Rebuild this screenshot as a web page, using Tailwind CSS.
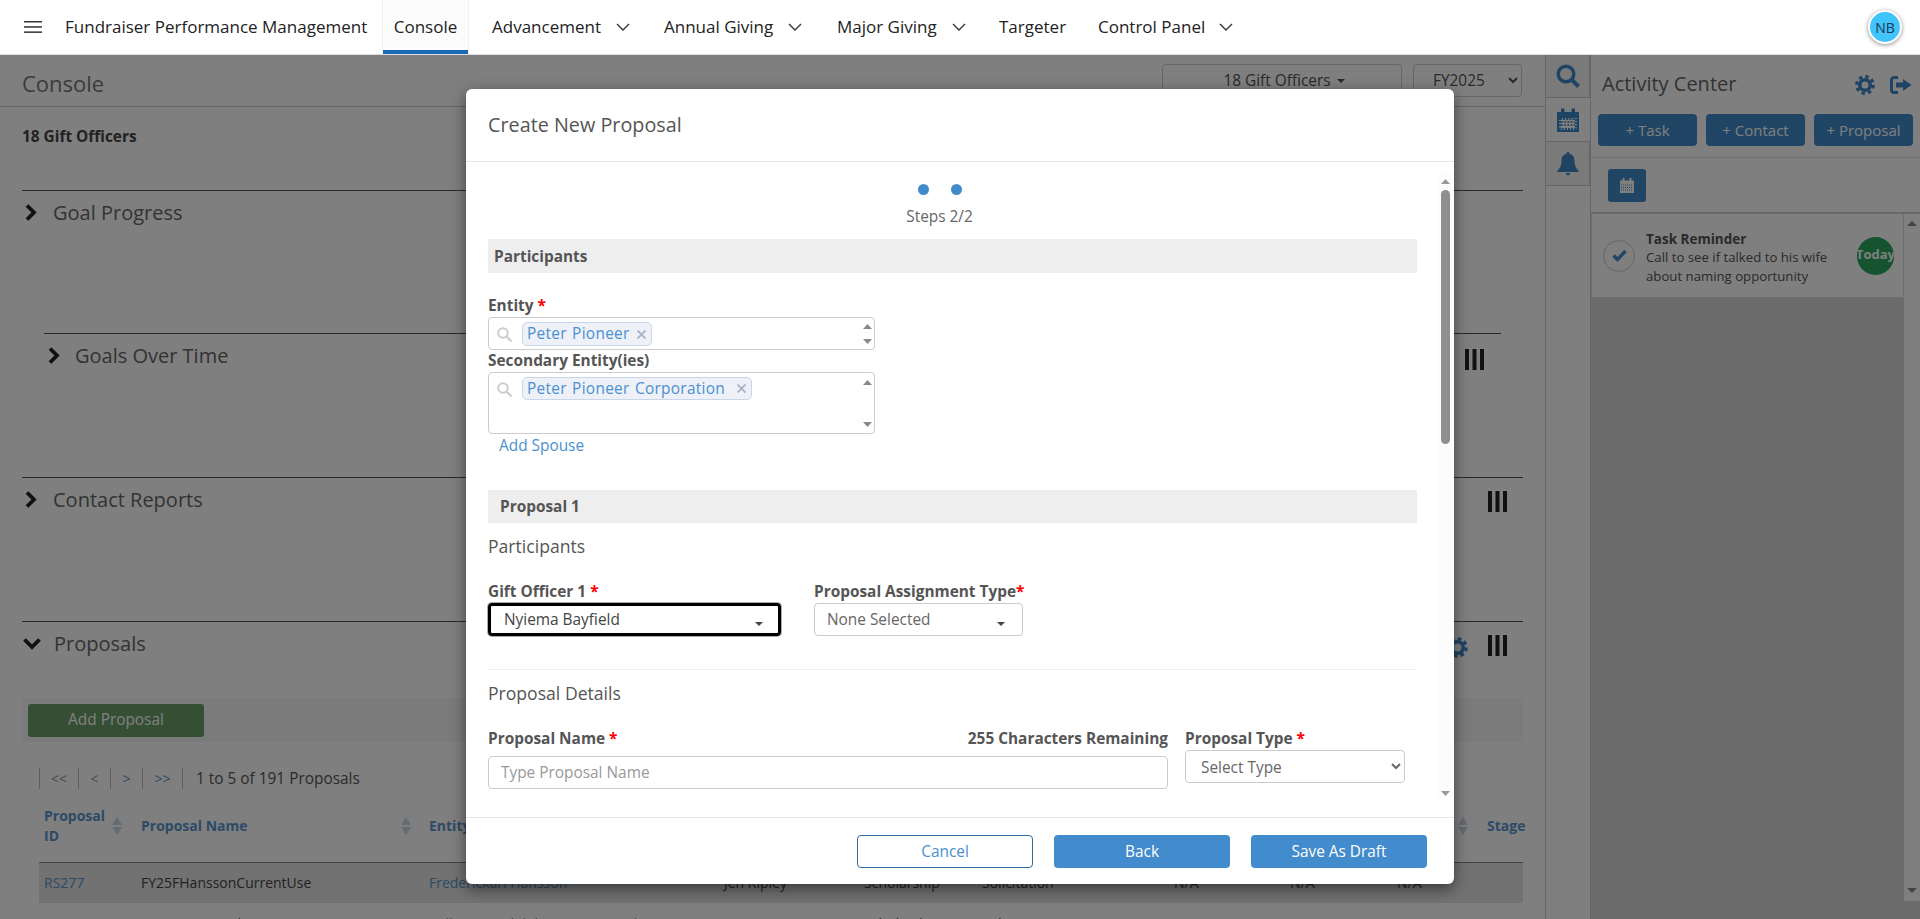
<!DOCTYPE html>
<html lang="en">
<head>
    <meta charset="UTF-8">
    <title>Fundraiser Performance Management</title>
    <script src="https://cdn.jsdelivr.net/npm/@tailwindcss/browser@4"></script>
</head>
<body class="h-[919px] overflow-hidden bg-white font-['Open_Sans',sans-serif] text-[15.4px] text-[#333]">

    <!-- top nav -->
    <header class="relative z-30 flex h-[55px] items-center border-b border-[#ddd] bg-white text-[17px] text-[#222]">
        <svg class="ml-[24px] h-[14px] w-[18px]" viewBox="0 0 18 14" fill="#333"><rect y="1" width="18" height="1.5"/><rect y="6.2" width="18" height="1.5"/><rect y="11.4" width="18" height="1.5"/></svg>
        <span class="ml-[23px] w-[317px] whitespace-nowrap">Fundraiser Performance Management</span>
        <a class="relative flex h-full w-[87px] items-center justify-center border-x border-[#f0f0f0] bg-[#fcfcfc]">Console<span class="absolute inset-x-0 bottom-0 h-[4px] bg-[#1b6ab5]"></span></a>
        <a class="ml-[23px] flex w-[172px] items-center">Advancement<svg class="ml-[15px] h-[9px] w-[14px]" viewBox="0 0 14 9" fill="none" stroke="#333" stroke-width="1.4"><path d="M1 1l6 6 6-6"/></svg></a>
        <a class="flex w-[173px] items-center">Annual Giving<svg class="ml-[15px] h-[9px] w-[14px]" viewBox="0 0 14 9" fill="none" stroke="#333" stroke-width="1.4"><path d="M1 1l6 6 6-6"/></svg></a>
        <a class="flex w-[162px] items-center">Major Giving<svg class="ml-[15px] h-[9px] w-[14px]" viewBox="0 0 14 9" fill="none" stroke="#333" stroke-width="1.4"><path d="M1 1l6 6 6-6"/></svg></a>
        <a class="w-[99px]">Targeter</a>
        <a class="flex items-center">Control Panel<svg class="ml-[14px] h-[9px] w-[14px]" viewBox="0 0 14 9" fill="none" stroke="#333" stroke-width="1.4"><path d="M1 1l6 6 6-6"/></svg></a>
        <div class="ml-auto mr-[18px] flex h-[34px] w-[34px] items-center justify-center rounded-full border-[2px] border-white bg-[#40c4fb] text-[14px] text-[#1d3557] shadow-[0_1px_4px_rgba(0,0,0,0.45)]">NB</div>
    </header>

    <!-- page under the modal -->
    <main class="relative flex h-[864px] overflow-hidden">
        <section class="w-[1546px] shrink-0 border-r border-[#ccc]">
            <div class="flex h-[52px] items-center border-b border-[#ccc] pl-[22px] pr-[23px]">
                <h1 class="mt-[5px] text-[22px] text-[#777]">Console</h1>
                <button class="ml-auto flex h-[33px] w-[240px] items-center justify-center gap-[6px] rounded-[4px] border border-[#ccc] pl-[4px] text-[#555]">18 Gift Officers<span class="h-0 w-0 border-x-[4px] border-t-[4px] border-x-transparent border-t-[#555]"></span></button>
                <select class="ml-[11px] h-[33px] w-[109px] rounded-[4px] border border-[#ccc] bg-white pl-[15px] text-[#555]"><option>FY2025</option></select>
            </div>
            <div class="h-[83px] pl-[22px] pt-[20px] font-bold leading-[20px] text-[#444]">18 Gift Officers</div>

            <div class="mx-[22px] h-[143px] border-t border-[#555] text-[20px] text-[#666]">
                <div class="flex h-[43px] items-center pl-[3px]">
                    <svg class="h-[17px] w-[12px]" viewBox="0 0 12 17" fill="none" stroke="#222" stroke-width="3.8"><path d="M2 1.500L9 8.500 2 15.500"/></svg>
                    <span class="ml-[16px]">Goal Progress</span>
                </div>
            </div>
            <div class="mx-[44px] mr-[44px] h-[144px] border-t border-[#555] text-[20px] text-[#666]">
                <div class="flex h-[43px] items-center pl-[4px]">
                    <svg class="h-[17px] w-[12px]" viewBox="0 0 12 17" fill="none" stroke="#222" stroke-width="3.8"><path d="M2 1.500L9 8.500 2 15.500"/></svg>
                    <span class="ml-[15px]">Goals Over Time</span>
                    <svg class="ml-auto mr-[17px] mt-[7px] h-[21px] w-[19px]" viewBox="0 0 19 21" fill="#222"><rect width="4" height="21"/><rect x="7.500" width="4" height="21"/><rect x="15" width="4" height="21"/></svg>
                </div>
            </div>
            <div class="mx-[22px] h-[144px] border-t border-[#555] text-[20px] text-[#666]">
                <div class="flex h-[43px] items-center pl-[3px]">
                    <svg class="h-[17px] w-[12px]" viewBox="0 0 12 17" fill="none" stroke="#222" stroke-width="3.8"><path d="M2 1.500L9 8.500 2 15.500"/></svg>
                    <span class="ml-[16px]">Contact Reports</span>
                    <svg class="ml-auto mr-[16px] mt-[4px] h-[21px] w-[19px]" viewBox="0 0 19 21" fill="#222"><rect width="4" height="21"/><rect x="7.500" width="4" height="21"/><rect x="15" width="4" height="21"/></svg>
                </div>
            </div>
            <div class="mx-[22px] border-t border-[#555] text-[20px] text-[#666]">
                <div class="flex h-[43px] items-center pl-[1px]">
                    <svg class="h-[13px] w-[18px]" viewBox="0 0 18 13" fill="none" stroke="#222" stroke-width="3.8"><path d="M1.500 2.500L9 10l7.500-7.500"/></svg>
                    <span class="ml-[13px]">Proposals</span>
                    <svg class="ml-auto mr-[20px] mt-[7px] h-[21px] w-[21px]" viewBox="0 0 20 20"><circle cx="10" cy="10" r="5.500" fill="none" stroke="#3f86c4" stroke-width="3.500"/><circle cx="10" cy="10" r="8.300" fill="none" stroke="#3f86c4" stroke-width="3" stroke-dasharray="3.500 3"/></svg>
                    <svg class="mr-[16px] mt-[4px] h-[21px] w-[19px]" viewBox="0 0 19 21" fill="#222"><rect width="4" height="21"/><rect x="7.500" width="4" height="21"/><rect x="15" width="4" height="21"/></svg>
                </div>
                <div class="mt-[33px] flex h-[44px] items-center bg-[#f6f6f6] pl-[6px]">
                    <button class="h-[33px] w-[176px] rounded-[3px] bg-[#6a9f6a] text-[15.4px] text-white">Add Proposal</button>
                </div>
                <div class="mt-[26px] flex h-[21px] items-center pl-[17px] text-[14px]">
                    <span class="flex h-full w-[40px] items-center justify-center border-x border-[#bbb] text-[#999]">&lt;&lt;</span>
                    <span class="flex h-full w-[32px] items-center justify-center border-r border-[#bbb] text-[#999]">&lt;</span>
                    <span class="flex h-full w-[32px] items-center justify-center border-r border-[#bbb] text-[#5b8fc4]">&gt;</span>
                    <span class="flex h-full w-[40px] items-center justify-center border-r border-[#bbb] text-[#5b8fc4]">&gt;&gt;</span>
                    <span class="ml-[13px] text-[15.4px] text-[#555]">1 to 5 of 191 Proposals</span>
                </div>
                <table class="ml-[17px] mt-[1px] w-[1484px] table-fixed border-collapse text-[14px] leading-[20px]">
                    <colgroup>
                        <col class="w-[96px]"><col class="w-[288px]"><col class="w-[295px]"><col class="w-[140px]"><col class="w-[118px]"><col class="w-[192px]"><col class="w-[116px]"><col class="w-[107px]"><col class="w-[90px]"><col>
                    </colgroup>
                    <thead class="font-bold text-[#5a94cc]">
                        <tr class="h-[72px] border-b border-[#888] text-left">
                            <th class="relative pl-[5px]"><span class="block w-[70px]">Proposal ID</span>
                                <svg class="absolute right-[13px] top-[27px] h-[18px] w-[10px]" viewBox="0 0 10 18" fill="#c8d6e3"><path d="M5 0l5 8H0zM5 18L0 10h10z"/></svg></th>
                            <th class="relative pl-[6px]">Proposal Name
                                <svg class="absolute right-[12px] top-[27px] h-[18px] w-[10px]" viewBox="0 0 10 18" fill="#c8d6e3"><path d="M5 0l5 8H0zM5 18L0 10h10z"/></svg></th>
                            <th class="pl-[6px]">Entity</th>
                            <th></th><th></th><th></th><th></th><th></th>
                            <th class="relative"><svg class="absolute right-[13px] top-[27px] h-[18px] w-[10px]" viewBox="0 0 10 18" fill="#c8d6e3"><path d="M5 0l5 8H0zM5 18L0 10h10z"/></svg></th>
                            <th class="pl-[6px]">Stage</th>
                        </tr>
                    </thead>
                    <tbody class="text-[#444]">
                        <tr class="h-[41px] bg-[#e4e4e4]">
                            <td class="pl-[5px] text-[#5a94cc]">RS277</td>
                            <td class="pl-[6px]">FY25FHanssonCurrentUse</td>
                            <td class="pl-[6px] text-[#5a94cc]">Frederickarl Hansson</td>
                            <td class="pl-[6px]">Jen Ripley</td>
                            <td class="pl-[6px]">Scholarship</td>
                            <td class="pl-[6px]">Solicitation</td>
                            <td class="pl-[6px]">N/A</td>
                            <td class="pl-[6px]">N/A</td>
                            <td class="pl-[6px]">N/A</td>
                            <td></td>
                        </tr>
                        <tr class="h-[41px]">
                            <td class="pl-[5px] text-[#5a94cc]">RS276</td>
                            <td class="pl-[6px]">FY25 Hauert Edu 2024R</td>
                            <td class="pl-[6px] text-[#5a94cc]">William Randolph Hauert Foundation</td>
                            <td class="pl-[6px]">Jason Carter</td>
                            <td class="pl-[6px]">Scholarship</td>
                            <td class="pl-[6px]">Solicitation</td>
                            <td class="pl-[6px]">N/A</td>
                            <td class="pl-[6px]">N/A</td>
                            <td class="pl-[6px]">N/A</td>
                            <td></td>
                        </tr>
                    </tbody>
                </table>
            </div>
        </section>

        <!-- tab strip -->
        <nav class="w-[44px] shrink-0">
            <div class="flex h-[43px] items-center justify-center border-b border-r border-[#ccc] bg-[#f4f4f4]">
                <svg class="h-[24px] w-[24px]" viewBox="0 0 24 24" fill="none" stroke="#3f86c4" stroke-width="3.400"><circle cx="10" cy="10" r="7.800"/><path d="M15.500 15.500l7 7" stroke-width="4"/></svg>
            </div>
            <div class="flex h-[43px] items-center justify-center">
                <svg class="h-[24px] w-[22px]" viewBox="0 0 22 24" fill="#3f86c4"><path d="M0 4h22v20H0zM2 10v12h18V10z"/><rect x="4" y="0.500" width="3.500" height="5"/><rect x="14.500" y="0.500" width="3.500" height="5"/><path d="M3 11h16v10H3z" stroke="#3f86c4" stroke-width="2" stroke-dasharray="2 1.200" fill="none"/><path d="M4 14h14M4 17h14" stroke="#3f86c4" stroke-width="1.500" stroke-dasharray="2 1.200"/></svg>
            </div>
            <div class="flex h-[45px] items-center justify-center border-y border-r border-[#ccc] bg-[#f4f4f4]">
                <svg class="h-[24px] w-[22px]" viewBox="0 0 22 24" fill="#3f86c4"><path d="M11 0c1 0 1.500.8 1.500 1.800C16 2.600 17.500 5.500 17.500 9c0 5 2 7.500 4 9.500v1.500H.5v-1.500c2-2 4-4.500 4-9.500 0-3.500 1.500-6.400 5-7.200C9.500.8 10 0 11 0zM9 21h4c0 1.500-1 2.500-2 2.500S9 22.500 9 21z"/></svg>
            </div>
        </nav>

        <!-- activity center -->
        <aside class="flex w-[330px] shrink-0 flex-col border-l border-[#ccc] bg-[#d6d6d6]">
            <div class="bg-white">
                <div class="flex h-[59px] items-center pl-[11px]">
                    <h2 class="mb-[2px] text-[20px] text-[#666]">Activity Center</h2>
                    <svg class="ml-auto h-[20px] w-[20px]" viewBox="0 0 20 20"><circle cx="10" cy="10" r="5.300" fill="none" stroke="#3f86c4" stroke-width="3.600"/><circle cx="10" cy="10" r="8.400" fill="none" stroke="#3f86c4" stroke-width="3" stroke-dasharray="3.500 3.100"/></svg>
                    <svg class="ml-[15px] mr-[8px] h-[18px] w-[22px]" viewBox="0 0 22 18"><path d="M8 1.500H4A2.500 2.500 0 0 0 1.500 4v10A2.500 2.500 0 0 0 4 16.500h4" fill="none" stroke="#3f86c4" stroke-width="3"/><path d="M13 3l8.500 6-8.500 6v-3.500H6v-5h7z" fill="#3f86c4"/></svg>
                </div>
                <div class="flex h-[44px] gap-[9px] border-b border-[#e0e0e0] pl-[7px] pb-[11px] text-[15px] text-white">
                    <button class="w-[99px] rounded-[4px] bg-[#428bca]">+ Task</button>
                    <button class="w-[99px] rounded-[4px] bg-[#428bca]">+ Contact</button>
                    <button class="w-[99px] rounded-[4px] bg-[#428bca]">+ Proposal</button>
                </div>
                <div class="flex h-[56px] items-center border-b-[2px] border-[#d0d0d0] pl-[17px] pt-[1px]">
                    <button class="flex h-[33px] w-[38px] items-center justify-center rounded-[3px] bg-[#428bca]">
                        <svg class="h-[15px] w-[14px]" viewBox="0 0 14 15" fill="white"><path d="M0 2.500h14V15H0z"/><rect x="2.500" y="0" width="2" height="3"/><rect x="9.500" y="0" width="2" height="3"/><path d="M1 7h12M1 9.500h12M1 12h12" stroke="#428bca" stroke-width="1" stroke-dasharray="1 1"/></svg>
                    </button>
                </div>
            </div>
            <div class="flex">
                <div class="flex h-[84px] w-[314px] items-center border-x border-b border-[#ddd] bg-white pl-[11px]">
                    <span class="flex h-[32px] w-[32px] shrink-0 items-center justify-center rounded-full border border-[#ccc]">
                        <svg class="h-[13px] w-[15px]" viewBox="0 0 15 13" fill="none" stroke="#428bca" stroke-width="3.400"><path d="M1.500 6.500L5.500 10.500 13.500 2"/></svg>
                    </span>
                    <div class="ml-[11px] mt-[5px] w-[205px] text-[13.2px] leading-[19px] text-[#555]">
                        <div class="text-[13.500px] font-bold leading-[17px] text-[#555]">Task Reminder</div>
                        Call to see if talked to his wife about naming opportunity
                    </div>
                    <span class="ml-[6px] flex h-[38px] w-[37px] shrink-0 items-start justify-center overflow-hidden rounded-full bg-[#2da85e] pt-[8px] text-[13px] font-bold leading-[18px] text-white">Today</span>
                </div>
                <div class="flex h-[687px] w-[16px] flex-col items-center bg-white pt-[7px] pb-[8px]">
                    <svg class="h-[5px] w-[10px]" viewBox="0 0 10 5" fill="#888"><path d="M5 0l5 5H0z"/></svg>
                    <svg class="mt-auto h-[5px] w-[10px]" viewBox="0 0 10 5" fill="#888"><path d="M0 0h10L5 5z"/></svg>
                </div>
            </div>
        </aside>
    </main>

    <!-- backdrop -->
    <div class="absolute inset-x-0 bottom-0 top-[55px] z-10 bg-black/50"></div>

    <!-- modal -->
    <div class="absolute left-[466px] top-[89px] z-20 h-[795px] w-[988px] rounded-[6px] bg-white text-[#555] shadow-[0_5px_15px_rgba(0,0,0,0.5)]">
        <div class="flex h-[73px] items-center border-b border-[#e5e5e5] pl-[22px] text-[19.8px]">Create New Proposal</div>

        <div class="relative h-[655px] overflow-hidden px-[22px]">
            <div class="flex w-[903px] justify-center gap-[22px] pt-[22px]">
                <span class="h-[11px] w-[11px] rounded-full bg-[#428bca]"></span>
                <span class="h-[11px] w-[11px] rounded-full bg-[#428bca]"></span>
            </div>
            <div class="mt-[12px] h-[20px] w-[903px] text-center leading-[20px] text-[#666]">Steps 2/2</div>

            <div class="mt-[12px] flex h-[34px] w-[929px] items-center bg-[#eee] pl-[6px] pt-[1px] font-bold">Participants</div>

            <div class="mt-[23px] h-[20px] font-bold leading-[20px]">Entity <span class="text-[#f00]">*</span></div>
            <div class="relative mt-[1px] h-[33px] w-[387px] rounded-[4px] border border-[#ccc] pl-[33px] pt-[4px]">
                <svg class="absolute left-[8px] top-[9px] h-[15px] w-[15px]" viewBox="0 0 15 15" fill="none" stroke="#ccc" stroke-width="2"><circle cx="6" cy="6" r="4.800"/><path d="M9.500 9.500l5 5"/></svg>
                <span class="inline-flex h-[24px] items-center rounded-[5px] border border-[#c9d6ea] bg-[#eef1f8] pl-[4px] pr-[5px] tracking-[0.3px] text-[#4a90d0] [word-spacing:1px]">Peter Pioneer<svg class="ml-[7px] h-[9px] w-[9px]" viewBox="0 0 9 9" stroke="#a9b3c6" stroke-width="1.800"><path d="M.5.500l8 8M8.500.500l-8 8"/></svg></span>
                <svg class="absolute right-[2px] top-[6px] h-[5px] w-[9px]" viewBox="0 0 9 5" fill="#888"><path d="M4.500 0L9 5H0z"/></svg>
                <svg class="absolute bottom-[5px] right-[2px] h-[5px] w-[9px]" viewBox="0 0 9 5" fill="#888"><path d="M0 0h9L4.500 5z"/></svg>
            </div>
            <div class="mt-[1px] h-[20px] font-bold leading-[20px]">Secondary Entity(ies)</div>
            <div class="relative mt-[1px] h-[62px] w-[387px] rounded-[4px] border border-[#ccc] pl-[33px] pt-[4px]">
                <svg class="absolute left-[8px] top-[9px] h-[15px] w-[15px]" viewBox="0 0 15 15" fill="none" stroke="#ccc" stroke-width="2"><circle cx="6" cy="6" r="4.800"/><path d="M9.500 9.500l5 5"/></svg>
                <span class="inline-flex h-[23px] items-center rounded-[5px] border border-[#c9d6ea] bg-[#eef1f8] pl-[4px] pr-[5px] tracking-[0.3px] text-[#4a90d0] [word-spacing:1px]">Peter Pioneer Corporation<svg class="ml-[12px] h-[9px] w-[9px]" viewBox="0 0 9 9" stroke="#a9b3c6" stroke-width="1.800"><path d="M.5.500l8 8M8.500.500l-8 8"/></svg></span>
                <svg class="absolute right-[2px] top-[7px] h-[5px] w-[9px]" viewBox="0 0 9 5" fill="#888"><path d="M4.500 0L9 5H0z"/></svg>
                <svg class="absolute bottom-[6px] right-[2px] h-[5px] w-[9px]" viewBox="0 0 9 5" fill="#888"><path d="M0 0h9L4.500 5z"/></svg>
            </div>
            <a class="mt-[2px] block h-[20px] pl-[11px] leading-[20px] text-[#4a90d0]">Add Spouse</a>

            <div class="mt-[34px] flex h-[33px] w-[929px] items-center bg-[#eee] pl-[12px] font-bold">Proposal 1</div>
            <div class="mt-[11px] h-[24px] text-[17.6px] leading-[24px]">Participants</div>

            <div class="mt-[24px] flex gap-[33px]">
                <div class="w-[293px]">
                    <div class="h-[20px] font-bold leading-[20px]">Gift Officer 1 <span class="text-[#f00]">*</span></div>
                    <button class="mt-[1px] flex h-[33px] w-full items-center rounded-[4px] border-[3px] border-black pl-[13px] pr-[15px] shadow-[0_0_0_1px_#aaa] text-[#444]">Nyiema Bayfield<span class="ml-auto mt-[8px] h-0 w-0 border-x-[4px] border-t-[4px] border-x-transparent border-t-[#444]"></span></button>
                </div>
                <div class="w-[208px]">
                    <div class="h-[20px] whitespace-nowrap font-bold leading-[20px]">Proposal Assignment Type<span class="text-[#f00]">*</span></div>
                    <button class="mt-[1px] flex h-[33px] w-[209px] items-center rounded-[4px] border border-[#ccc] pl-[12px] pr-[17px] text-[#666]">None Selected<span class="ml-auto mt-[8px] h-0 w-0 border-x-[4px] border-t-[4px] border-x-transparent border-t-[#444]"></span></button>
                </div>
            </div>

            <div class="mt-[33px] h-[1px] w-[929px] bg-[#eee]"></div>
            <div class="mt-[11px] h-[24px] text-[17.6px] leading-[24px]">Proposal Details</div>

            <div class="mt-[24px] flex">
                <div class="w-[680px]">
                    <div class="flex h-[20px] justify-between font-bold leading-[20px]">
                        <span>Proposal Name <span class="text-[#f00]">*</span></span>
                        <span>255 Characters Remaining</span>
                    </div>
                    <input type="text" placeholder="Type Proposal Name" class="mt-[7px] h-[33px] w-full rounded-[4px] border border-[#ccc] pl-[12px] placeholder:text-[#999]">
                </div>
                <div class="ml-[17px] w-[220px]">
                    <div class="h-[20px] font-bold leading-[20px]">Proposal Type <span class="text-[#f00]">*</span></div>
                    <select class="mt-[1px] h-[33px] w-full rounded-[4px] border border-[#ccc] bg-white pl-[11px] pt-[2px] text-[#666]"><option>Select Type</option></select>
                </div>
            </div>

            <!-- modal scrollbar -->
            <div class="absolute bottom-[20px] right-[2px] top-[11px] flex w-[14px] flex-col items-center bg-[#fcfcfc]">
                <svg class="mt-[6px] h-[5px] w-[9px]" viewBox="0 0 9 5" fill="#999"><path d="M4.500 0L9 5H0z"/></svg>
                <div class="mt-[6px] h-[254px] w-[9px] rounded-full bg-[#8f8f8f]"></div>
                <svg class="mb-[1px] mt-auto h-[5px] w-[9px]" viewBox="0 0 9 5" fill="#999"><path d="M0 0h9L4.500 5z"/></svg>
            </div>
        </div>

        <div class="flex h-[67px] items-start border-t border-[#e5e5e5] pl-[391px] pt-[17px]">
            <button class="h-[33px] w-[176px] rounded-[4px] border border-[#2f6aa3] text-[#4a90d0]">Cancel</button>
            <button class="ml-[21px] h-[33px] w-[176px] rounded-[4px] bg-[#428bcc] text-white">Back</button>
            <button class="ml-[21px] h-[33px] w-[176px] rounded-[4px] bg-[#428bcc] text-white">Save As Draft</button>
        </div>
    </div>
</body>
</html>
